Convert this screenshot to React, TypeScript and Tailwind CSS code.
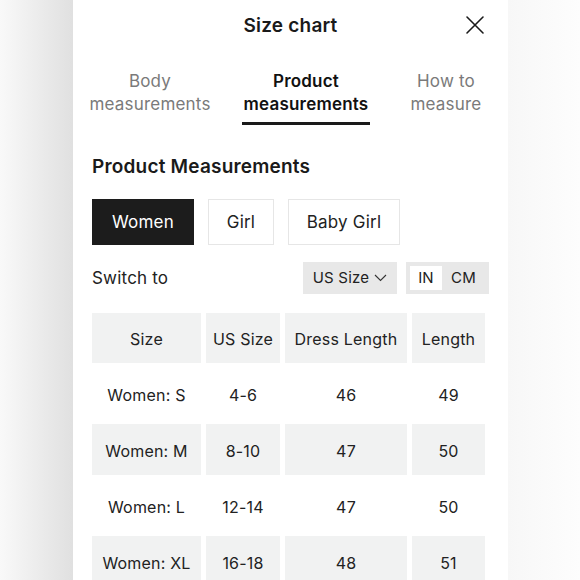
const rows = [
  { size: "Women: S", us: "4-6", dress: "46", length: "49" },
  { size: "Women: M", us: "8-10", dress: "47", length: "50" },
  { size: "Women: L", us: "12-14", dress: "47", length: "50" },
  { size: "Women: XL", us: "16-18", dress: "48", length: "51" },
];

function CloseIcon() {
  return (
    <svg width="20" height="20" viewBox="0 0 20 20" fill="none" stroke="#1a1a1a" strokeWidth="1.6" strokeLinecap="round">
      <path d="M2 2 L18 18 M18 2 L2 18" />
    </svg>
  );
}

function Chevron() {
  return (
    <svg width="13" height="8" viewBox="0 0 13 8" fill="none" stroke="#333" strokeWidth="1.1">
      <path d="M1 1 L6.5 6.5 L12 1" />
    </svg>
  );
}

function Cell({ children, shaded }: { children: React.ReactNode; shaded: boolean }) {
  return (
    <div
      className={`flex h-[51px] items-center justify-center pt-[2px] text-[16px] text-[#222] ${shaded ? "bg-[#f1f2f2]" : "bg-white"}`}
    >
      {children}
    </div>
  );
}

export default function App() {
  return (
    <div
      className="h-[580px] w-[580px] overflow-hidden bg-[linear-gradient(to_right,#f9f9f9_0px,#e0e0e0_73px,#f7f7f7_508px,#fdfdfd_580px)] tracking-[0.2px]"
      style={{ fontFamily: "Inter, 'Noto Sans', sans-serif" }}
    >
      <div className="ml-[73px] h-[580px] w-[435px] bg-white pt-[1px]">
        <div className="relative flex h-[50px] items-center justify-center">
          <h2 className="text-[19px] font-semibold text-[#1a1a1a]">Size chart</h2>
          <button type="button" className="absolute right-[23px] top-[14px]">
            <CloseIcon />
          </button>
        </div>

        <div className="mt-[19px] flex items-start text-[17px] leading-[23px]">
          <div className="ml-[15px] w-[124px] text-center text-[#7a7a7a]">
            Body
            <br />
            measurements
          </div>
          <div className="ml-[30px] w-[128px] text-center font-semibold text-[#111]">
            Product
            <br />
            measurements
            <div className="mt-[6px] h-[3px] bg-[#1a1a1a]" />
          </div>
          <div className="ml-[34px] w-[84px] text-center text-[#7a7a7a]">
            How to
            <br />
            measure
          </div>
        </div>

        <div className="px-[19px]">
          <h3 className="mt-[28px] text-[19px] font-semibold leading-[28px] text-[#1a1a1a]">
            Product Measurements
          </h3>

          <div className="mt-[18px] flex gap-[14px] text-[17px]">
            <button type="button" className="h-[46px] w-[102px] bg-[#1c1c1c] pt-[1px] text-white">
              Women
            </button>
            <button type="button" className="h-[46px] w-[66px] border border-[#e6e6e6] pt-[1px] text-[#222]">
              Girl
            </button>
            <button type="button" className="h-[46px] w-[112px] border border-[#e6e6e6] pt-[1px] text-[#222]">
              Baby Girl
            </button>
          </div>

          <div className="mt-[17px] flex h-[32px] items-center">
            <span className="flex-1 pt-[1px] text-[17px] text-[#222]">Switch to</span>
            <div className="flex h-[32px] w-[94px] items-center justify-center gap-[5px] bg-[#e8e8e8] text-[15px] text-[#222]">
              US Size
              <Chevron />
            </div>
            <div className="ml-[9px] flex h-[32px] w-[83px] items-center bg-[#e8e8e8] p-[4px] text-[15px] text-[#222]">
              <span className="flex h-[24px] w-[32px] items-center justify-center bg-white">IN</span>
              <span className="flex-1 text-center">CM</span>
            </div>
          </div>

          <div className="mt-[19px] grid grid-cols-[109px_74px_122px_73px] gap-[5px]">
            {["Size", "US Size", "Dress Length", "Length"].map((h) => (
              <div key={h} className="flex h-[50px] items-center justify-center bg-[#f1f2f2] pt-[2px] text-[16px] text-[#222]">
                {h}
              </div>
            ))}
            {rows.map((r, i) => {
              const shaded = i % 2 === 1;
              return (
                <div key={r.size} className="contents">
                  <Cell shaded={shaded}>{r.size}</Cell>
                  <Cell shaded={shaded}>{r.us}</Cell>
                  <Cell shaded={shaded}>{r.dress}</Cell>
                  <Cell shaded={shaded}>{r.length}</Cell>
                </div>
              );
            })}
          </div>
        </div>
      </div>
    </div>
  );
}
